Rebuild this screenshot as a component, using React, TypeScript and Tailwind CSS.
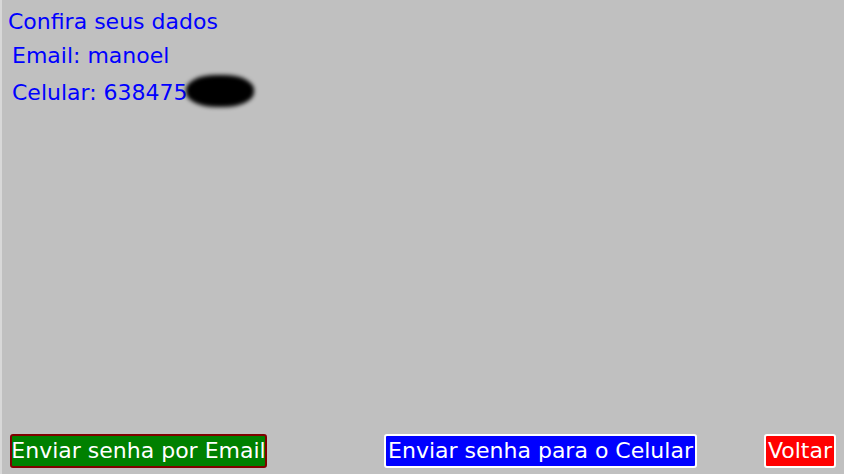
export default function App() {
  return (
    <div
      className="flex h-[474px] w-[844px] flex-col border-l-2 border-[#d8d8d8] bg-[#c0c0c0] text-[22px] leading-[26px] text-[#0000ff]"
      style={{ fontFamily: '"DejaVu Sans", sans-serif' }}
    >
      <div className="pl-[6px] pt-[9px]">Confira seus dados</div>
      <div className="pl-[10px] pt-[8px]">Email: manoel</div>
      <div className="flex items-center pl-[10px] pt-[10px]">
        <span>Celular: 638475</span>
        <span className="ml-[-2px] mt-[-4px] h-[32px] w-[68px] rounded-[45%] bg-black blur-[2px]" />
      </div>
      <div className="mt-auto flex items-center pb-[6px] pl-[8px] pr-[8px] text-white">
        <button className="flex h-[34px] w-[257px] items-center justify-center whitespace-nowrap rounded-[3px] border-2 border-[#800000] bg-[#008000]">
          Enviar senha por Email
        </button>
        <button className="ml-[117px] flex h-[34px] w-[313px] items-center justify-center whitespace-nowrap rounded-[3px] border-2 border-white bg-[#0000ff]">
          Enviar senha para o Celular
        </button>
        <button className="ml-auto flex h-[34px] w-[72px] items-center justify-center whitespace-nowrap rounded-[3px] border-2 border-white bg-[#ff0000]">
          Voltar
        </button>
      </div>
    </div>
  );
}
